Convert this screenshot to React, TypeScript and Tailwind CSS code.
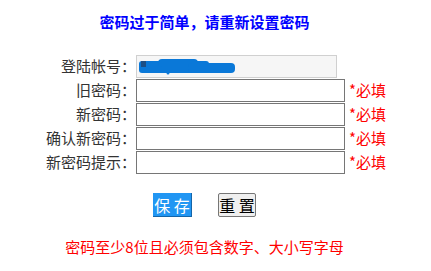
import React from "react";

const rows = ["旧密码：", "新密码：", "确认新密码：", "新密码提示："];

export default function App() {
  return (
    <div className="w-[431px] h-[271px] bg-white font-['Noto_Sans_CJK_SC','Noto_Sans',sans-serif] text-[15px] text-[#333]">
      <div className="w-[409px] flex flex-col items-center">
        <div className="mt-[12px] h-[20px] leading-[20px] font-bold text-[#0000ff]">
          密码过于简单，请重新设置密码
        </div>
        <div className="mt-[22px] self-start flex flex-col">
          <div className="flex items-center h-[24px]">
            <div className="w-[136px] text-right leading-[20px]">登陆帐号：</div>
            <div className="w-[201px] h-[23px] bg-[#f6f6f6] border border-[#d0d0d0] flex items-center pl-[1px]">
              <svg className="shrink-0 block" width="100" height="17" viewBox="0 0 100 17">
                <rect x="1" y="3" width="70" height="12" rx="3" fill="#0a78d8" />
                <rect x="20" y="1" width="40" height="8" rx="4" fill="#0a78d8" />
                <rect x="50" y="5" width="47" height="10" rx="4" fill="#0a78d8" />
                <rect x="3" y="3" width="5" height="6" fill="#1c4f86" />
                <circle cx="30" cy="15" r="1.5" fill="#0a78d8" />
              </svg>
            </div>
          </div>
          {rows.map((r) => (
            <div key={r} className="flex items-center h-[24px]">
              <div className="w-[136px] text-right leading-[20px]">{r}</div>
              <div className="w-[209px] h-[23px] bg-white border border-[#767676]" />
              <div className="ml-[4px] text-[#ff0000] leading-[20px]">*必填</div>
            </div>
          ))}
        </div>
        <div className="mt-[19px] flex gap-[26px]">
          <div className="h-[24px] w-[39px] bg-[#2196f3] border-r border-b border-[#1565a8] text-white text-[16px] leading-[22px] flex items-center justify-center whitespace-pre">
            保 存
          </div>
          <div className="h-[24px] w-[38px] bg-[#efefef] border border-[#767676] rounded-[2px] text-black text-[16px] leading-[22px] flex items-center justify-center whitespace-pre">
            重 置
          </div>
        </div>
        <div className="mt-[20px] h-[20px] leading-[20px] text-[#ff0000]">
          密码至少8位且必须包含数字、大小写字母
        </div>
      </div>
    </div>
  );
}
